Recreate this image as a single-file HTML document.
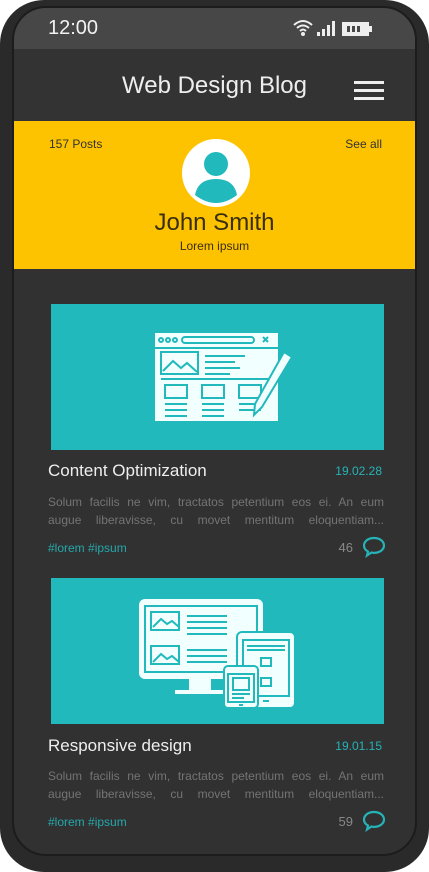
<!DOCTYPE html>
<html><head><style>
*{margin:0;padding:0;box-sizing:border-box}
body{width:429px;height:857px;background:#fff;position:relative;overflow:hidden;font-family:"Liberation Sans",sans-serif}
.phone{position:absolute;left:0;top:0;width:429px;height:872px;background:#2a2a2a;border-radius:44px}
.screen{position:absolute;left:12px;top:6px;width:405px;height:850px;background:#313131;border-radius:34px;border:2px solid #1c1c1c;overflow:hidden}
.status{position:absolute;left:0;top:0;width:100%;height:41px;background:#474747}
.time{position:absolute;left:34px;top:9px;color:#f2f2f2;font-size:20px}
.hdr{position:absolute;top:41px;left:0;width:100%;height:74px;background:#333}
.title{position:absolute;left:108px;top:23px;color:#eee;font-size:24px}
.ham{position:absolute;left:340px;width:30px;height:3px;background:#eee}
.yel{position:absolute;top:113px;left:0;width:100%;height:148px;background:#fdc300}
.sm{position:absolute;top:16px;font-size:12px;color:#333}
.name{position:absolute;top:88px;width:100%;text-align:center;font-size:24px;color:#3a2e10}
.sub{position:absolute;top:118px;width:100%;text-align:center;font-size:12px;color:#3a2e10}
.img{position:absolute;left:37px;width:333px;height:146px;background:#22b9bd}
.ct{position:absolute;left:34px;color:#eee;font-size:17px}
.dt{position:absolute;right:33px;color:#26b3b8;font-size:12px}
.bd{position:absolute;left:34px;width:336px;color:#747474;font-size:12px;line-height:18px}
.bd span{display:block;text-align:justify;text-align-last:justify;white-space:nowrap}
.tg{position:absolute;left:34px;color:#26a7ab;font-size:12px}
.cn{position:absolute;right:62px;color:#888;font-size:13px}
</style></head><body>
<div class="phone"></div>
<div class="screen">
 <div class="status"><div class="time">12:00</div>
  <svg style="position:absolute;left:278px;top:10px" width="96" height="22" viewBox="0 0 96 22">
   <path d="M2 7 Q11 -1 20 7 M5 10 Q11 5 17 10 M8 13 Q11 10 14 13" stroke="#eee" stroke-width="2" fill="none"/><circle cx="11" cy="16" r="2" fill="#eee"/>
   <rect x="25" y="14" width="3" height="4" fill="#eee"/><rect x="30" y="11" width="3" height="7" fill="#eee"/><rect x="35" y="7" width="3" height="11" fill="#eee"/><rect x="40" y="3" width="3" height="15" fill="#eee"/>
   <rect x="50" y="4" width="27" height="14" fill="#eee"/><rect x="77" y="8" width="3" height="6" fill="#eee"/>
   <rect x="55" y="8" width="3" height="6" fill="#474747"/><rect x="60" y="8" width="3" height="6" fill="#474747"/><rect x="65" y="8" width="3" height="6" fill="#474747"/>
  </svg></div>
 <div class="hdr"><div class="title">Web Design Blog</div>
  <div class="ham" style="top:32px"></div><div class="ham" style="top:40px"></div><div class="ham" style="top:48px"></div></div>
 <div class="yel">
  <div class="sm" style="left:35px">157 Posts</div><div class="sm" style="right:33px">See all</div>
  <svg style="position:absolute;left:168px;top:18px" width="68" height="68" viewBox="0 0 68 68"><circle cx="34" cy="34" r="34" fill="#fff"/><circle cx="34" cy="25" r="12" fill="#22b9bd"/><path d="M13 56 Q16 40 34 40 Q52 40 55 56 Q34 72 13 56Z" fill="#22b9bd"/></svg>
  <div class="name">John Smith</div><div class="sub">Lorem ipsum</div></div>

 <div class="img" style="top:296px">
  <svg style="position:absolute;left:100px;top:26px" width="145" height="96" viewBox="0 0 145 96" fill="none" stroke="#eafcfc" stroke-width="2.5">
   <rect x="4" y="3" width="123" height="88" fill="#f2ffff" stroke="none"/>
   <g stroke="#22b9bd" stroke-width="2"><circle cx="10" cy="10" r="2"/><circle cx="17" cy="10" r="2"/><circle cx="24" cy="10" r="2"/><rect x="31" y="7" width="72" height="6" rx="3"/><path d="M112 7l5 5M117 7l-5 5"/>
   <line x1="4" y1="18" x2="127" y2="18"/>
   <rect x="10" y="22" width="37" height="22"/><path d="M12 41l10-10 8 7 6-5 10 9"/>
   <path d="M54 26h40M54 32h30M54 38h35M54 44h25"/>
   <line x1="10" y1="49" x2="127" y2="49"/>
   <rect x="14" y="55" width="22" height="13"/><rect x="51" y="55" width="22" height="13"/><rect x="88" y="55" width="22" height="13"/>
   <path d="M14 74h22M14 80h22M14 86h22M51 74h22M51 80h22M51 86h22M88 74h22M88 80h22"/></g>
   <path d="M133 22l8 5-30 50-8 8 1-11z" fill="#f2ffff" stroke="#22b9bd" stroke-width="2"/>
  </svg></div>
 <div class="ct" style="top:453px">Content Optimization</div><div class="dt" style="top:456px">19.02.28</div>
 <div class="bd" style="top:485px"><span>Solum facilis ne vim, tractatos petentium eos ei. An eum</span><span>augue liberavisse, cu movet mentitum eloquentiam...</span></div>
 <div class="tg" style="top:533px">#lorem #ipsum</div><div class="cn" style="top:532px">46</div>
 <svg style="position:absolute;left:348px;top:528px" width="24" height="22" viewBox="0 0 24 22"><path d="M12 2C6 2 2 5.5 2 9.5c0 3 2 5 4 6l-1 4 4.5-3c1 .3 1.8.4 2.5.4 6 0 10-3.5 10-7.4S18 2 12 2z" fill="none" stroke="#26b3b8" stroke-width="2.2"/></svg>

 <div class="img" style="top:570px">
  <svg style="position:absolute;left:86px;top:18px" width="160" height="112" viewBox="0 0 160 112" fill="none" stroke-width="2">
   <rect x="2" y="3" width="124" height="80" rx="6" fill="#f2ffff"/>
   <g stroke="#22b9bd"><rect x="8" y="10" width="112" height="66"/><rect x="14" y="16" width="28" height="18"/><path d="M16 31l8-8 6 5 5-3 7 6M50 20h40M50 26h40M50 32h40M50 38h40"/><rect x="14" y="50" width="28" height="18"/><path d="M16 66l8-8 6 5 5-3 7 6M50 54h40M50 60h40M50 66h40"/></g>
   <rect x="52" y="83" width="22" height="12" fill="#f2ffff"/><rect x="38" y="94" width="50" height="4" fill="#f2ffff"/>
   <rect x="100" y="36" width="58" height="76" rx="5" fill="#f2ffff" stroke="#22b9bd"/>
   <g stroke="#22b9bd"><rect x="106" y="44" width="46" height="56"/><path d="M110 50h38M110 54h38"/><rect x="124" y="62" width="10" height="8"/><rect x="124" y="82" width="10" height="8"/><path d="M126 105h6"/></g>
   <rect x="87" y="70" width="34" height="42" rx="4" fill="#f2ffff" stroke="#22b9bd"/>
   <g stroke="#22b9bd"><rect x="91" y="78" width="26" height="28"/><rect x="96" y="82" width="16" height="12"/><path d="M95 98h18M95 102h12M102 109h4"/></g>
  </svg></div>
 <div class="ct" style="top:728px">Responsive design</div><div class="dt" style="top:731px">19.01.15</div>
 <div class="bd" style="top:759px"><span>Solum facilis ne vim, tractatos petentium eos ei. An eum</span><span>augue liberavisse, cu movet mentitum eloquentiam...</span></div>
 <div class="tg" style="top:807px">#lorem #ipsum</div><div class="cn" style="top:806px">59</div>
 <svg style="position:absolute;left:348px;top:802px" width="24" height="22" viewBox="0 0 24 22"><path d="M12 2C6 2 2 5.5 2 9.5c0 3 2 5 4 6l-1 4 4.5-3c1 .3 1.8.4 2.5.4 6 0 10-3.5 10-7.4S18 2 12 2z" fill="none" stroke="#26b3b8" stroke-width="2.2"/></svg>
</div>
</body></html>
